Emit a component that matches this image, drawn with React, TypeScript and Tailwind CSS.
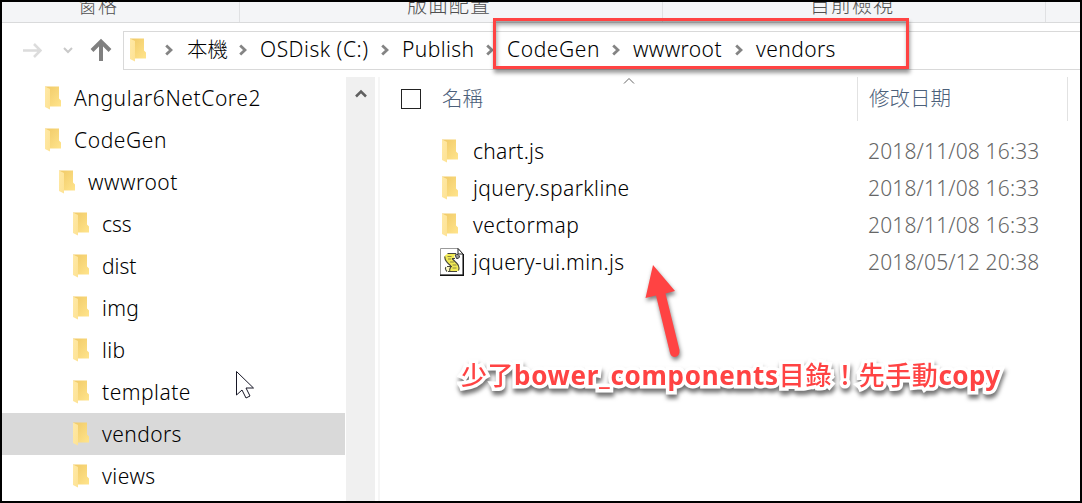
import React from "react";

function Folder() {
  return (
    <svg className="block h-6 w-4 shrink-0" viewBox="0 0 16 24">
      <defs>
        <linearGradient id="folderBack" x1="0" y1="0" x2="1" y2="1">
          <stop offset="0" stopColor="#f0c966" />
          <stop offset="1" stopColor="#ffe48c" />
        </linearGradient>
        <linearGradient id="folderFront" x1="0" y1="0" x2="1" y2="1">
          <stop offset="0" stopColor="#ffe9a6" />
          <stop offset="1" stopColor="#fde294" />
        </linearGradient>
      </defs>
      <path d="M0 0.500h14v12l2 2v6H3z" fill="url(#folderBack)" />
      <path d="M0 0.500l5 2.500v20.500L0 21z" fill="url(#folderFront)" />
    </svg>
  );
}

function Crumb() {
  return (
    <svg className="block h-3 w-2 shrink-0" viewBox="0 0 8 12">
      <path d="M1.200 1.500L6 6l-4.800 4.500" fill="none" stroke="#848484" strokeWidth="2.800" />
    </svg>
  );
}

function ScriptFile() {
  return (
    <svg className="block h-7 w-6 shrink-0" viewBox="0 0 24 28">
      <path d="M0.500 0.500H18L23 6V27H0.500z" fill="#fff" stroke="#9a9a9a" />
      <path d="M23.300 6V27.300H0" fill="none" stroke="#111" strokeWidth="1.400" />
      <path d="M18 0.500V6h5z" fill="#fff" stroke="#222" />
      <path d="M15 6.500q4-1 4.500 2.500-1 2-3 1.500z" fill="#9b9b9b" stroke="#333" />
      <path d="M8 6h8q-3 2-1 4.500h-3l5 5q3 3 2 6.500l-2 1.500H9l1-4 1-1-4-4q-4-4-2-7 1-1.500 3-1.500z" fill="#f1ea55" />
      <path d="M7 18.500h4q-2 2-1 5H7.500q-2.500-3-.500-5z" fill="#fbf7bd" />
      <path d="M7.500 5.500H16M12 10.500H15M5 8.500q-1 4 6 9.500M12 10.500l5 5q3 3 1.500 7M7 18.500h5M8 23.500h9M6 19q-1.500 2 1 4.500M11 19q-2 2-1 4.500" fill="none" stroke="#45453c" strokeWidth="1.100" />
      <path d="M7.500 8.500h4M8 11h3M10 14h4M12.500 17h4M12.500 20h4" fill="none" stroke="#8c8740" />
    </svg>
  );
}

const tree = [
  { name: "Angular6NetCore2", pad: "pl-[43px]", track: "tracking-[0.58px]" },
  { name: "CodeGen", pad: "pl-[43px]", track: "tracking-[0.6px]" },
  { name: "wwwroot", pad: "pl-[57px]", track: "tracking-[0.55px]" },
  { name: "css", pad: "pl-[71px]", track: "tracking-[0px]" },
  { name: "dist", pad: "pl-[71px]", track: "tracking-[0px]" },
  { name: "img", pad: "pl-[71px]", track: "tracking-[0.3px]" },
  { name: "lib", pad: "pl-[71px]", track: "tracking-[0.3px]" },
  { name: "template", pad: "pl-[71px]", track: "tracking-[0.5px]" },
  { name: "vendors", pad: "pl-[71px]", track: "tracking-[0.4px]" },
  { name: "views", pad: "pl-[71px]", track: "tracking-[0.5px]" },
];

const files = [
  { name: "chart.js", date: "2018/11/08 16:33", track: "tracking-[0.3px]" },
  { name: "jquery.sparkline", date: "2018/11/08 16:33", track: "tracking-[0.4px]" },
  { name: "vectormap", date: "2018/11/08 16:33", track: "tracking-[0.5px]" },
  { name: "jquery-ui.min.js", date: "2018/05/12 20:38", track: "tracking-[0.4px]" },
];

const crumbs = [
  { name: "本機", box: "w-[52px] text-[20.5px] font-light" },
  { name: "OSDisk (C:)", box: "w-[121px] tracking-[0.5px]" },
  { name: "Publish", box: "w-[84px] tracking-[0.4px]" },
  { name: "CodeGen", box: "w-[105px] tracking-[0.6px]" },
  { name: "wwwroot", box: "w-[102px] tracking-[0.4px]" },
];

function AddressBar() {
  return (
    <div className="flex h-[54px] items-center">
      <svg className="ml-[20px] h-5 w-5 shrink-0" viewBox="0 0 20 20">
        <path d="M1 10.500H19M12 4l6.500 6.500L12 17" fill="none" stroke="#dcdcdc" strokeWidth="2.600" />
      </svg>
      <svg className="ml-[21px] h-2 w-[10px] shrink-0" viewBox="0 0 10 8">
        <path d="M1 2l4 4 4-4" fill="none" stroke="#c9c9c9" strokeWidth="2" />
      </svg>
      <svg className="ml-[16px] h-6 w-6 shrink-0" viewBox="0 0 24 24">
        <path d="M12 23V4M3 12.500l9-9 9 9" fill="none" stroke="#808080" strokeWidth="4" />
      </svg>
      <div className="ml-[10px] flex h-[39px] flex-1 items-center border border-r-0 border-[#d9d9d9] pl-[6px]">
        <div className="-mt-px"><Folder /></div>
        <div className="ml-[19px] mr-px"><Crumb /></div>
        {crumbs.map((c) => (
          <React.Fragment key={c.name}>
            <span className={`-mt-[2px] ml-[13px] shrink-0 ${c.box}`}>{c.name}</span>
            <Crumb />
          </React.Fragment>
        ))}
        <span className="-mt-[2px] ml-[13px] tracking-[0.4px]">vendors</span>
      </div>
    </div>
  );
}

export default function App() {
  return (
    <div className="relative flex h-[503px] w-[1082px] flex-col overflow-hidden whitespace-nowrap border-2 border-black bg-white font-['Noto_Sans','Noto_Sans_CJK_TC',sans-serif] text-[21px] font-[350] leading-[28px] text-black">
      <div className="flex h-[21px] shrink-0 overflow-hidden border-b border-[#d9dadb] bg-[#f4f5f7] font-light text-[#505050]">
        <div className="-mt-[10px] w-[238px] border-r border-[#e0e1e3] pl-[76px] text-[19px] leading-[28px] tracking-[1px]">窗格</div>
        <div className="-mt-[10px] w-[423px] border-r border-[#e0e1e3] pl-[167px] text-[20px] leading-[28px] tracking-[1px]">版面配置</div>
        <div className="-mt-[10px] w-[383px] border-r border-[#e0e1e3] pl-[147px] text-[20px] leading-[28px] tracking-[1px]">目前檢視</div>
      </div>
      <AddressBar />
      <div className="flex min-h-0 flex-1">
        <div className="flex w-[343px] shrink-0 flex-col">
          {tree.map((t) => (
            <div key={t.name} className={`flex h-[42px] shrink-0 items-center gap-[13px] ${t.pad} ${t.name === "vendors" ? "bg-[#d9d9d9]" : ""}`}>
              <Folder />
              <span className={t.track}>{t.name}</span>
            </div>
          ))}
        </div>
        <div className="ml-px w-[29px] bg-[#f0f0f0] pt-[11px]">
          <svg className="mx-auto h-3 w-3" viewBox="0 0 12 12">
            <path d="M1 8.500L6 3.500l5 5" fill="none" stroke="#606060" strokeWidth="2.500" />
          </svg>
        </div>
        <div className="ml-[3px] w-[2px] bg-[#f6f6f6]" />
        <div className="flex flex-1 flex-col pl-px">
          <div className="flex h-[44px] text-[20.5px] font-light text-[#4c607a]">
            <div className="relative flex w-[477px] items-center border-r border-[#e2e2e2] pl-[20px]">
              <span className="h-5 w-5 border border-[#222]" />
              <span className="-mt-[2px] ml-[21px]">名稱</span>
              <svg className="absolute left-[242px] top-0 h-2 w-3" viewBox="0 0 12 8">
                <path d="M1 6.500l5-5 5 5" fill="none" stroke="#666" />
              </svg>
            </div>
            <div className="-mt-[2px] flex w-[209px] items-center pl-[11px]">修改日期</div>
            <div className="w-px bg-[#e2e2e2]" />
          </div>
          <div className="flex flex-col pt-[11px]">
            {files.map((f) => (
              <div key={f.name} className="flex h-[37px] items-center">
                <span className="ml-[59px] flex w-[33px] shrink-0 justify-start">
                  {f.name === "jquery-ui.min.js" ? <ScriptFile /> : <span className="ml-[2px]"><Folder /></span>}
                </span>
                <span className={`w-[395px] shrink-0 ${f.track}`}>{f.name}</span>
                <span className="tracking-[0.15px] text-[#666]">{f.date}</span>
              </div>
            ))}
          </div>
        </div>
      </div>

      <div className="absolute left-[491px] top-[16px] h-[51px] w-[416px] border-3 border-[#ff4343] shadow-[1px_4px_4px_rgba(0,0,0,0.4),inset_1px_4px_4px_rgba(0,0,0,0.35)]" />
      <svg className="absolute left-[636px] top-[255px] h-[110px] w-[60px] drop-shadow-[1px_3px_2px_rgba(0,0,0,0.5)]" viewBox="638 257 60 110">
        <path d="M653 265L675 291 665.500 293.500 679.500 350Q680 356 675 357 671 357 670 353L656 295.500 645.500 298z" fill="#ff4343" />
      </svg>
      <svg className="absolute left-[232px] top-[367px] h-[34px] w-[22px]" viewBox="0 0 22 34">
        <path d="M2.500 2.500V26l5.500-5 4 8 4-2-4-8h7.500z" fill="#fff" stroke="#171726" />
      </svg>
      <div className="absolute left-[459px] top-[355px] text-[26px] font-bold leading-[36px] text-[#ff4343] drop-shadow-[1px_4px_2px_rgba(0,0,0,0.55)] [-webkit-text-stroke:7px_white] [paint-order:stroke_fill] [stroke-linejoin:round]">
        <span className="font-medium tracking-[0.5px]">少了</span>
        <span className="tracking-[0.7px]">bower_components</span>
        <span className="font-medium tracking-[0.6px]">目錄！先手動</span>
        <span className="tracking-[0.4px]">copy</span>
      </div>
    </div>
  );
}
